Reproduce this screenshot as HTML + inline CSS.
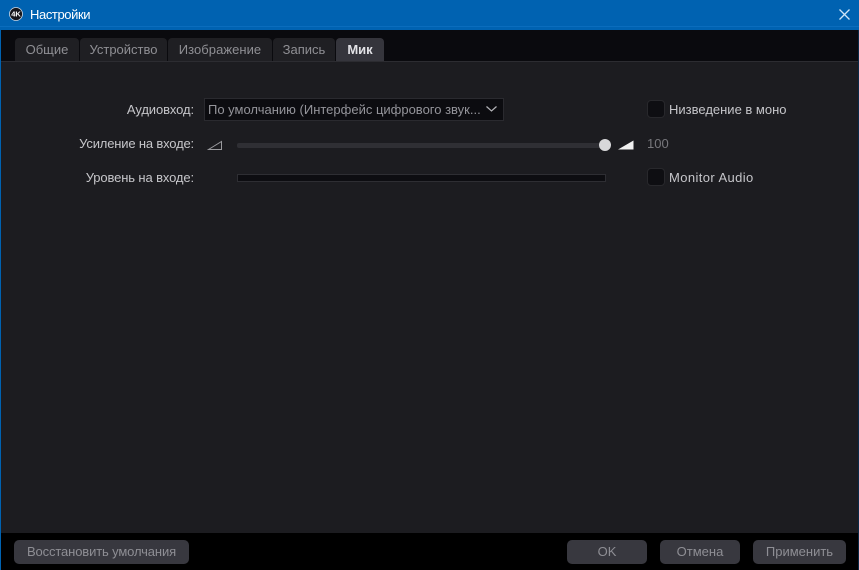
<!DOCTYPE html>
<html><head><meta charset="utf-8"><style>
html,body{margin:0;padding:0;width:859px;height:570px;overflow:hidden;background:#000}
body{font-family:"Liberation Sans","DejaVu Sans",sans-serif;font-size:13px;position:relative;color:#c4c4c8}
div,span{position:absolute;white-space:nowrap;box-sizing:border-box}
.tab{top:38px;height:23px;background:#1f1f23;border-radius:4px 4px 0 0;color:#8f8f94;text-align:center;line-height:23px}
.lbl{color:#c6c6ca;text-align:right;right:665px;line-height:16px}
.btn{top:540px;height:24px;background:#38383f;border-radius:5px;color:#8e8e94;text-align:center;line-height:24px}
.cb{left:647px;width:18px;height:18px;background:#0e0e12;border:1px solid #28282c;border-radius:4px}
</style></head><body>
<div style="left:0;top:0;width:859px;height:30px;background:#0062b1"></div>
<div style="left:0;top:26px;width:859px;height:1px;background:#0b6dbd"></div>
<div style="left:0;top:30px;width:859px;height:32px;background:#0a0a0e"></div>
<div style="left:0;top:62px;width:859px;height:471px;background:#1c1c20"></div>
<div style="left:0;top:30px;width:1px;height:540px;background:#0062b1"></div>
<div style="left:858px;top:30px;width:1px;height:540px;background:#0a2a48"></div>
<div style="left:1px;top:61px;width:857px;height:1px;background:#2c2c31"></div>

<svg style="position:absolute;left:9px;top:7px" width="14" height="14" viewBox="0 0 14 14"><circle cx="7" cy="7" r="6.5" fill="#15151a" stroke="#cfd8e4" stroke-width=".8"/><text x="7" y="9.6" font-size="7.5" font-weight="bold" text-anchor="middle" fill="#fff" font-family="Liberation Sans">4K</text></svg>
<div style="left:30px;top:7px;color:#fff;line-height:16px;letter-spacing:-.4px">Настройки</div>
<svg style="position:absolute;left:839px;top:9px" width="11" height="11" viewBox="0 0 11 11"><path d="M.5 .5L10.5 10.5M10.5 .5L.5 10.5" stroke="#cfe4f7" stroke-width="1.3" fill="none"/></svg>

<div class="tab" style="left:15px;width:64px">Общие</div>
<div class="tab" style="left:80px;width:87px">Устройство</div>
<div class="tab" style="left:168px;width:104px;letter-spacing:.05px">Изображение</div>
<div class="tab" style="left:273px;width:62px">Запись</div>
<div class="tab" style="left:336px;width:48px;background:#35353c;color:#e2e2e6;font-weight:bold">Мик</div>

<div class="lbl" style="top:102px;letter-spacing:-.1px">Аудиовход:</div>
<div class="lbl" style="top:136px;letter-spacing:-.17px">Усиление на входе:</div>
<div class="lbl" style="top:170px;letter-spacing:-.12px">Уровень на входе:</div>

<div style="left:204px;top:98px;width:300px;height:23px;background:#0c0c10;border:1px solid #2a2a2f;line-height:21px;padding-left:3px;color:#94949a;overflow:hidden">По умолчанию (Интерфейс цифрового звук...</div>
<svg style="position:absolute;left:485px;top:105px" width="13" height="8" viewBox="0 0 13 8"><path d="M1.5 1.5L6.5 6L11.5 1.5" stroke="#b4b4b8" stroke-width="1.2" fill="none"/></svg>

<svg style="position:absolute;left:207px;top:140px" width="16" height="11" viewBox="0 0 16 11"><path d="M1.5 9.5H14.5V1.5Z" stroke="#9a9a9e" stroke-width="1" fill="none"/></svg>
<div style="left:237px;top:143px;width:368px;height:5px;background:#2f2f34;border-radius:2px"></div>
<div style="left:599px;top:139px;width:12px;height:12px;background:#d8d8da;border-radius:50%"></div>
<svg style="position:absolute;left:618px;top:140px" width="16" height="10" viewBox="0 0 16 10"><path d="M0 9.5H15.5V0.5Z" fill="#f0f0f0"/></svg>
<div style="left:647px;top:136px;color:#77777c;line-height:16px">100</div>

<div style="left:237px;top:174px;width:369px;height:8px;background:#0d0d11;border:1px solid #2e2e33"></div>

<div class="cb" style="top:100px"></div>
<div style="left:669px;top:102px;line-height:16px;color:#c6c6ca">Низведение в моно</div>
<div class="cb" style="top:168px"></div>
<div style="left:669px;top:170px;line-height:16px;color:#c6c6ca;letter-spacing:.4px">Monitor Audio</div>

<div class="btn" style="left:14px;width:175px;letter-spacing:-.13px">Восстановить умолчания</div>
<div class="btn" style="left:567px;width:80px">OK</div>
<div class="btn" style="left:660px;width:80px">Отмена</div>
<div class="btn" style="left:753px;width:93px">Применить</div>
</body></html>
